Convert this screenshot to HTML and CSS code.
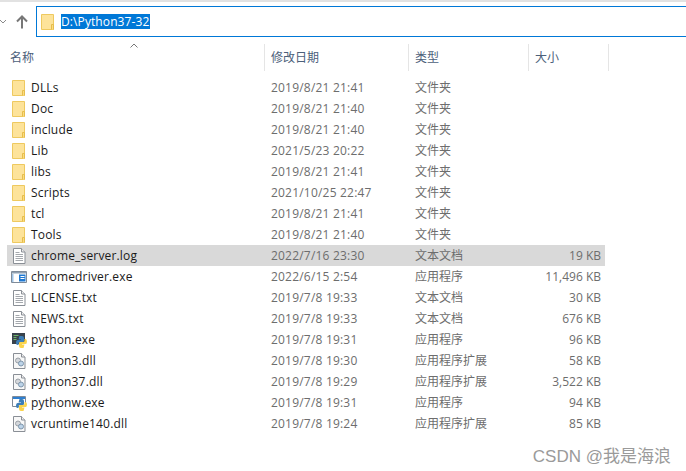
FILE: index.html
```html
<!DOCTYPE html>
<html lang="zh-CN">
<head>
    <meta charset="UTF-8">
    <title>D:\Python37-32</title>
    <link rel="stylesheet" href="styles.css">
</head>
<body>
    <svg class="sprites" width="0" height="0">
        <symbol id="folder" viewBox="0 0 16 16">
            <path d="M1.500 .5h12v15h-12z" fill="#fde39a" stroke="#eec95f"/>
            <path d="M11.500 15.500v-5h2v5" fill="#fbdc80" stroke="#e6bd4c"/>
        </symbol>
        <symbol id="doc" viewBox="0 0 16 16">
            <path d="M2.500 .5h8l3.500 3.500v11.500h-11.500z" fill="#fff" stroke="#8a8f96"/>
            <path d="M10.500 .5v3.500h3.500" fill="#eee" stroke="#8a8f96"/>
            <path d="M4.500 4.500h4M4.500 6.500h7.500M4.500 8.500h7.500M4.500 10.500h7.500M4.500 12.500h7.500" stroke="#a4a8ad"/>
        </symbol>
        <symbol id="dll" viewBox="0 0 16 16">
            <path d="M2.500 .5h8l3.500 3.500v11.500h-11.500z" fill="#f8f8f8" stroke="#8a8f96"/>
            <path d="M10.500 .5v3.500h3.500" fill="#eee" stroke="#8a8f96"/>
            <circle cx="7" cy="7.500" r="2.500" fill="#d5d8dc" stroke="#9aa0a6"/>
            <circle cx="10" cy="10.500" r="2.500" fill="#bcd3e8" stroke="#7d95ab"/>
        </symbol>
        <symbol id="exe" viewBox="0 0 16 16">
            <path d="M.5 2.500h15v11h-15z" fill="#fff" stroke="#7f8b99"/>
            <path d="M1 3h14v1.500h-14z" fill="#8fa0b2"/>
            <path d="M1 5h1.500v8h-1.500z" fill="#9fc3e6"/>
            <path d="M8 5.500h6.500v7h-6.500z" fill="#1f78d1"/>
            <path d="M9.500 7.500h4M9.500 9.500h4" stroke="#fff"/>
        </symbol>
        <symbol id="py" viewBox="0 0 16 16">
            <path d="M1 1h13v11h-13z" fill="#39424c"/>
            <path d="M2.500 3.500h5M2.500 5.500h3M2.500 7.500h3" stroke="#6fb56a"/>
            <path d="M8.500 4h2.500q2 0 2 2v3q0 1-1 1h-3q-1.500 0-1.500 1.500v1.500h-1q-1.500 0-1.500-2.500t1.500-2.500h3.500v-.5h-2.500z" fill="#3d7fb8"/>
            <path d="M12.500 16h-2.500q-2 0-2-2v-3q0-1 1-1h3q1.500 0 1.500-1.500v-1.500h1q1.500 0 1.500 2.500t-1.500 2.500h-3.500v.5h2.500z" fill="#fbd44c"/>
        </symbol>
        <symbol id="pyw" viewBox="0 0 16 16">
            <path d="M1.500 1.500h13v10h-13z" fill="#fff" stroke="#7f8b99"/>
            <path d="M2 2h12v2h-12z" fill="#2f7fd0"/>
            <path d="M8.500 4h2.500q2 0 2 2v3q0 1-1 1h-3q-1.500 0-1.500 1.500v1.500h-1q-1.500 0-1.500-2.500t1.500-2.500h3.500v-.5h-2.500z" fill="#3d7fb8"/>
            <path d="M12.500 16h-2.500q-2 0-2-2v-3q0-1 1-1h3q1.500 0 1.500-1.500v-1.500h1q1.500 0 1.500 2.500t-1.500 2.500h-3.500v.5h2.500z" fill="#fbd44c"/>
        </symbol>
    </svg>

    <div class="top-line"></div>

    <div class="toolbar">
        <svg class="nav-down" width="6" height="5" viewBox="0 0 6 5"><path d="M0 1l3 3 3-3" fill="none" stroke="#8a8a8a"/></svg>
        <svg class="nav-up" width="12" height="14" viewBox="0 0 12 14"><path d="M6 13.500v-12M1 6.500l5-5 5 5" fill="none" stroke="#777" stroke-width="2"/></svg>
        <div class="address">
            <svg class="icon"><use href="#folder"/></svg>
            <span class="path">D:\Python37-32</span>
        </div>
    </div>

    <div class="sort-row">
        <svg width="8" height="5" viewBox="0 0 8 5"><path d="M.5 4.500l3.500-3.500 3.500 3.500" fill="none" stroke="#777"/></svg>
    </div>

    <div class="header">
        <span class="col-name">名称</span>
        <span>修改日期</span>
        <span>类型</span>
        <span>大小</span>
    </div>

    <div class="list">
        <div class="row"><span class="name"><svg class="icon"><use href="#folder"/></svg>DLLs</span><span class="date">2019/8/21 21:41</span><span class="type">文件夹</span><span class="size"></span></div>
        <div class="row"><span class="name"><svg class="icon"><use href="#folder"/></svg>Doc</span><span class="date">2019/8/21 21:40</span><span class="type">文件夹</span><span class="size"></span></div>
        <div class="row"><span class="name"><svg class="icon"><use href="#folder"/></svg>include</span><span class="date">2019/8/21 21:40</span><span class="type">文件夹</span><span class="size"></span></div>
        <div class="row"><span class="name"><svg class="icon"><use href="#folder"/></svg>Lib</span><span class="date">2021/5/23 20:22</span><span class="type">文件夹</span><span class="size"></span></div>
        <div class="row"><span class="name"><svg class="icon"><use href="#folder"/></svg>libs</span><span class="date">2019/8/21 21:41</span><span class="type">文件夹</span><span class="size"></span></div>
        <div class="row"><span class="name"><svg class="icon"><use href="#folder"/></svg>Scripts</span><span class="date">2021/10/25 22:47</span><span class="type">文件夹</span><span class="size"></span></div>
        <div class="row"><span class="name"><svg class="icon"><use href="#folder"/></svg>tcl</span><span class="date">2019/8/21 21:41</span><span class="type">文件夹</span><span class="size"></span></div>
        <div class="row"><span class="name"><svg class="icon"><use href="#folder"/></svg>Tools</span><span class="date">2019/8/21 21:40</span><span class="type">文件夹</span><span class="size"></span></div>
        <div class="row selected"><span class="name"><svg class="icon"><use href="#doc"/></svg>chrome_server.log</span><span class="date">2022/7/16 23:30</span><span class="type">文本文档</span><span class="size">19 KB</span></div>
        <div class="row"><span class="name"><svg class="icon"><use href="#exe"/></svg>chromedriver.exe</span><span class="date">2022/6/15 2:54</span><span class="type">应用程序</span><span class="size">11,496 KB</span></div>
        <div class="row"><span class="name"><svg class="icon"><use href="#doc"/></svg>LICENSE.txt</span><span class="date">2019/7/8 19:33</span><span class="type">文本文档</span><span class="size">30 KB</span></div>
        <div class="row"><span class="name"><svg class="icon"><use href="#doc"/></svg>NEWS.txt</span><span class="date">2019/7/8 19:33</span><span class="type">文本文档</span><span class="size">676 KB</span></div>
        <div class="row"><span class="name"><svg class="icon"><use href="#py"/></svg>python.exe</span><span class="date">2019/7/8 19:31</span><span class="type">应用程序</span><span class="size">96 KB</span></div>
        <div class="row"><span class="name"><svg class="icon"><use href="#dll"/></svg>python3.dll</span><span class="date">2019/7/8 19:30</span><span class="type">应用程序扩展</span><span class="size">58 KB</span></div>
        <div class="row"><span class="name"><svg class="icon"><use href="#dll"/></svg>python37.dll</span><span class="date">2019/7/8 19:29</span><span class="type">应用程序扩展</span><span class="size">3,522 KB</span></div>
        <div class="row"><span class="name"><svg class="icon"><use href="#pyw"/></svg>pythonw.exe</span><span class="date">2019/7/8 19:31</span><span class="type">应用程序</span><span class="size">94 KB</span></div>
        <div class="row"><span class="name"><svg class="icon"><use href="#dll"/></svg>vcruntime140.dll</span><span class="date">2019/7/8 19:24</span><span class="type">应用程序扩展</span><span class="size">85 KB</span></div>
    </div>

    <div class="watermark">CSDN @我是海浪</div>
</body>
</html>
```

FILE: styles.css
```css
body {
    margin: 0;
    height: 471px;
    overflow: hidden;
    position: relative;
    background-color: #fff;
    font-family: "Open Sans", "Noto Sans CJK SC", sans-serif;
    font-size: 12px;
    color: #1a1a1a;
}
.sprites {
    display: block;
    height: 0;
}
.top-line {
    height: 2px;
    background-color: #e2e2e2;
}
.toolbar {
    display: flex;
    align-items: center;
    height: 31px;
    margin-top: 4px;
}
.nav-down {
    margin-right: 10px;
}
.nav-up {
    margin-right: 8px;
}
.address {
    flex: 1;
    display: flex;
    align-items: center;
    height: 100%;
    box-sizing: border-box;
    border: 1px solid #0078d7;
    border-right: none;
    padding-left: 3px;
}
.address .icon {
    width: 16px;
    height: 16px;
    margin-right: 5px;
}
.path {
    background-color: #0078d7;
    color: #fff;
    line-height: 15px;
    padding-right: 1px;
    letter-spacing: .1px;
}
.sort-row {
    height: 7px;
    padding-left: 130px;
}
.sort-row svg {
    display: block;
    padding-top: 6px;
}
.header {
    display: grid;
    grid-template-columns: 265px 144px 120px 80px;
    height: 27px;
    color: #4c607a;
}
.header span {
    display: flex;
    align-items: center;
    padding: 0 0 2px 6px;
    border-right: 1px solid #e5e5e5;
}
.header .col-name {
    padding-left: 10px;
}
.list {
    margin-top: 6px;
    padding-left: 7px;
}
.row {
    display: grid;
    grid-template-columns: 258px 144px 120px 76px;
    width: 598px;
    height: 21px;
    align-items: center;
    color: #6d6d6d;
}
.row.selected {
    background-color: #d9d9d9;
}
.name {
    display: flex;
    align-items: center;
    color: #1a1a1a;
    letter-spacing: .17px;
}
.name .icon {
    width: 16px;
    height: 16px;
    margin: 0 4px;
    flex: none;
}
.date {
    letter-spacing: .2px;
}
.row > span:not(.name) {
    padding-left: 6px;
}
.row > .type {
    padding-bottom: 2px;
}
.row > .size {
    text-align: right;
    padding: 0 4px 0 0;
}
.watermark {
    position: absolute;
    right: 15px;
    top: 442px;
    font-family: "Liberation Sans", "Noto Sans CJK SC", sans-serif;
    font-size: 17px;
    color: #9a9a9a;
}
```
